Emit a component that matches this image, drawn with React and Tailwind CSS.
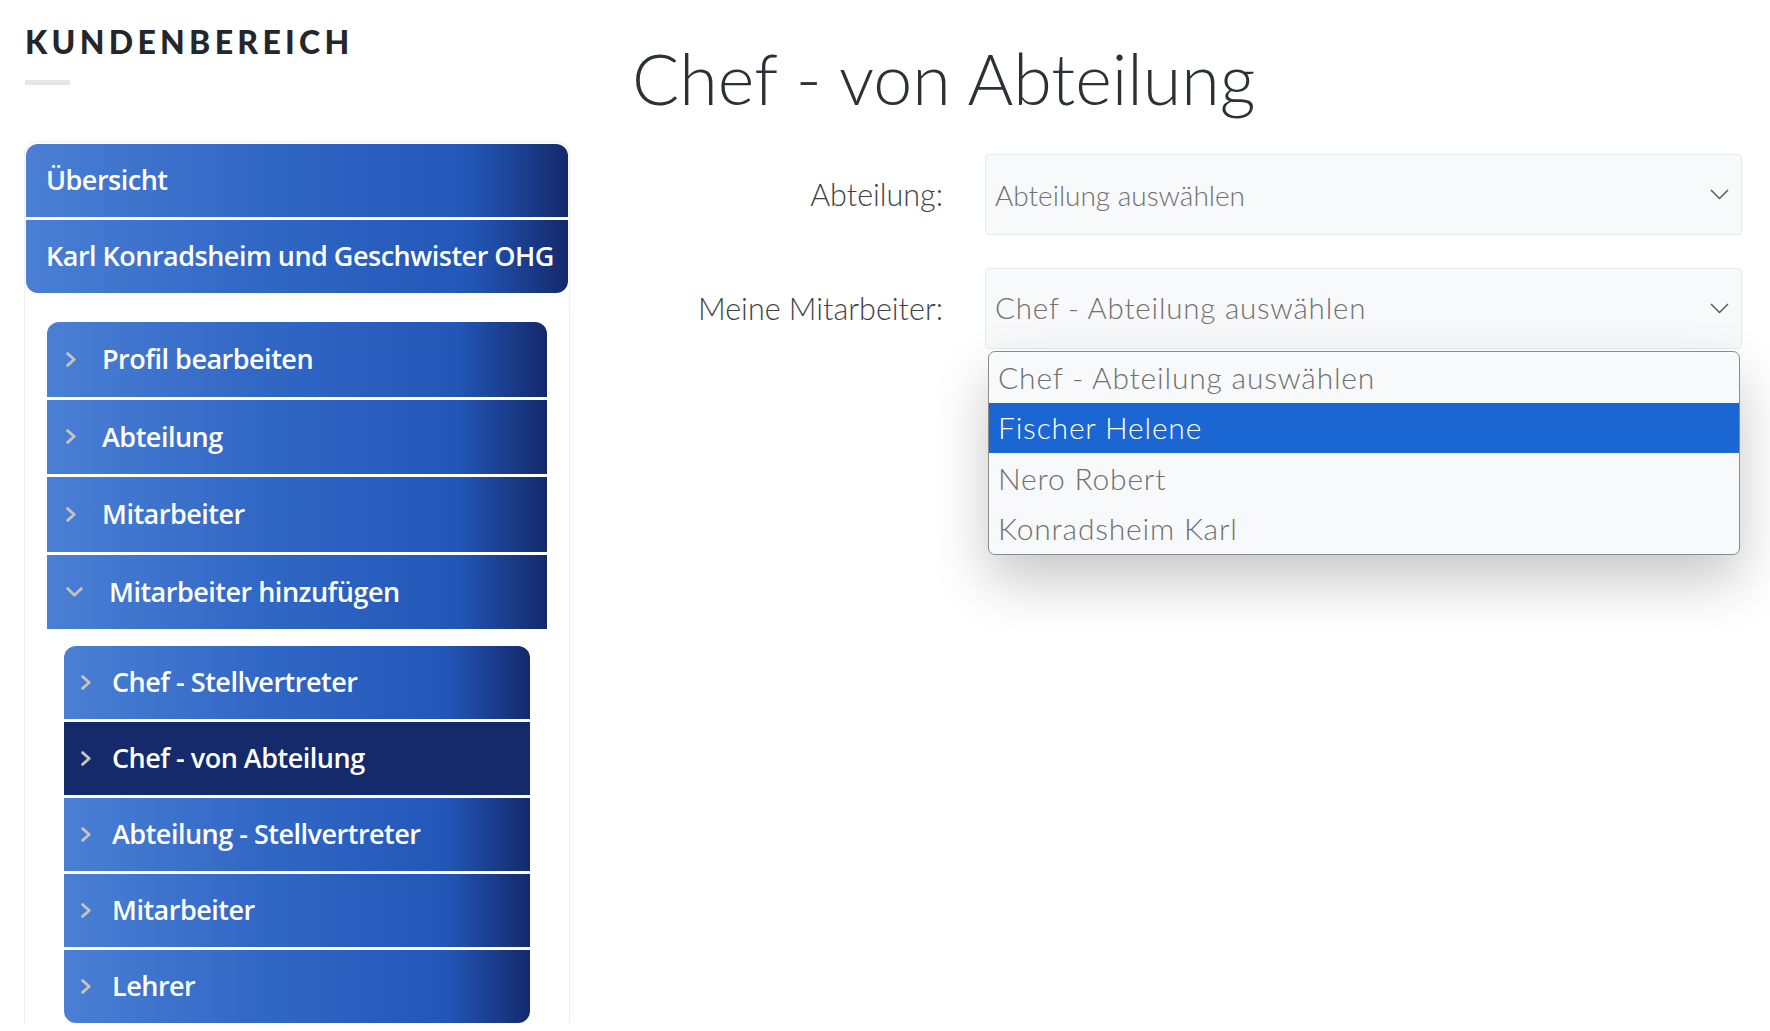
import React from 'react'
import clsx from 'clsx'

const GRAD = 'bg-[linear-gradient(to_right,#4a7fd4_0%,#3066c4_45%,#2257b8_82%,#14296b_100%)]'

const TOP_ITEMS = ['Übersicht', 'Karl Konradsheim und Geschwister OHG']

const SUB_ITEMS = [
    { label: 'Profil bearbeiten' },
    { label: 'Abteilung' },
    { label: 'Mitarbeiter' },
    { label: 'Mitarbeiter hinzufügen', open: true },
]

const NESTED_ITEMS = [
    { label: 'Chef - Stellvertreter' },
    { label: 'Chef - von Abteilung', active: true },
    { label: 'Abteilung - Stellvertreter' },
    { label: 'Mitarbeiter' },
    { label: 'Lehrer' },
]

const OPTIONS = ['Chef - Abteilung auswählen', 'Fischer Helene', 'Nero Robert', 'Konradsheim Karl']

function ChevronRight() {
    return (
        <svg width="10" height="15" viewBox="0 0 10 15" className="flex-shrink-0">
            <polyline points="1.6,1.6 8.2,7.5 1.6,13.4" fill="none" stroke="#c7c3bc" strokeWidth="2.8" strokeLinecap="round" strokeLinejoin="round" />
        </svg>
    )
}

function ChevronDown() {
    return (
        <svg width="17" height="10" viewBox="0 0 17 10" className="flex-shrink-0">
            <polyline points="1.6,1.6 8.5,8.2 15.4,1.6" fill="none" stroke="#c7c3bc" strokeWidth="2.8" strokeLinecap="round" strokeLinejoin="round" />
        </svg>
    )
}

function SelectCaret() {
    return (
        <svg width="19" height="11" viewBox="0 0 19 11">
            <polyline points="1,1 9.5,9.5 18,1" fill="none" stroke="#5a5a5a" strokeWidth="1.5" />
        </svg>
    )
}

function SidebarItem({ label, icon, active, tall }) {
    return (
        <div className={clsx(
            'flex items-center text-white text-[27px] font-semibold tracking-[-0.5px]',
            tall ? 'h-[74.5px]' : 'h-[73px]',
            active ? 'bg-[#142a6a]' : GRAD
        )}>
            {icon}
            <span className="pl-[1px]">{label}</span>
        </div>
    )
}

function Sidebar() {
    return (
        <aside className="w-[546px] flex-shrink-0 ml-[24px] mt-[141px] border border-b-0 border-[#efefef] rounded-t-[14px] font-['Open_Sans',sans-serif]">
            {/* Top level */}
            <div className="mx-[1px] mt-[2px] rounded-[12px] overflow-hidden flex flex-col gap-[3px] bg-white">
                {TOP_ITEMS.map((t) => (
                    <div key={t} className={clsx('flex items-center h-[73px] pl-[20px] text-white text-[27px] font-semibold tracking-[-0.5px]', GRAD)}>
                        {t}
                    </div>
                ))}
            </div>

            {/* Sub level */}
            <div className="mx-[22px] mt-[29px] rounded-t-[12px] overflow-hidden flex flex-col gap-[3px]">
                {SUB_ITEMS.map(({ label, open }) => (
                    <SidebarItem
                        key={label}
                        label={label}
                        tall
                        icon={<span className="ml-[19px] mr-[25px]">{open ? <ChevronDown /> : <ChevronRight />}</span>}
                    />
                ))}
            </div>

            {/* Nested level */}
            <div className="mx-[39px] mt-[17px] rounded-[12px] overflow-hidden flex flex-col gap-[3px]">
                {NESTED_ITEMS.map(({ label, active }) => (
                    <SidebarItem
                        key={label}
                        label={label}
                        active={active}
                        icon={<span className="ml-[17px] mr-[20px]"><ChevronRight /></span>}
                    />
                ))}
            </div>
        </aside>
    )
}

function Select({ value, size }) {
    return (
        <div className={clsx(
            'w-[757px] h-[81px] flex items-center justify-between pl-[9px] pr-[12px] bg-[#f8f9fa] border border-[#e7e9eb] rounded-[4px] text-[#707070] font-light',
            size
        )}>
            <span>{value}</span>
            <SelectCaret />
        </div>
    )
}

export default function App() {
    return (
        <div className="relative w-[1770px] h-[1031px] overflow-hidden bg-white">
            <div className="absolute left-[25px] top-[23px]">
                <p className="font-['Lato',sans-serif] font-black text-[32px] leading-[38px] tracking-[4.3px] text-[#23262b]">KUNDENBEREICH</p>
                <div className="mt-[19px] w-[45px] h-[5px] bg-[#e6e6e6]" />
            </div>

            <div className="flex">
                <Sidebar />

                <main className="flex-1 pl-[62px] font-['Lato',sans-serif]">
                    <h1 className="mt-[36px] text-[70px] leading-[84px] font-light text-[#2d3036]">Chef - von Abteilung</h1>

                    <div className="mt-[34px] flex flex-col gap-[33px]">
                        <div className="flex items-center">
                            <label className="w-[311px] text-right text-[30.5px] font-light text-[#3f4247]">Abteilung:</label>
                            <div className="ml-[42px]"><Select value="Abteilung auswählen" size="text-[28px]" /></div>
                        </div>
                        <div className="flex items-center">
                            <label className="w-[311px] text-right text-[30.5px] font-light text-[#3f4247]">Meine Mitarbeiter:</label>
                            <div className="ml-[42px] relative">
                                <Select value="Chef - Abteilung auswählen" size="text-[29.5px] tracking-[0.8px]" />
                                {/* open option list */}
                                <ul className="absolute left-[3px] right-[2px] top-[83px] bg-[#f8f9fa] border border-[#8a8a8a] rounded-[7px] overflow-hidden shadow-[0_26px_55px_rgba(0,0,0,0.22)] text-[30px] font-light tracking-[0.8px]">
                                    {OPTIONS.map((o, i) => (
                                        <li
                                            key={o}
                                            className={clsx(
                                                'h-[50.5px] flex items-center pl-[9px]',
                                                i === 1 ? 'bg-[#1a66d2] text-white' : 'text-[#707070]'
                                            )}
                                        >
                                            {o}
                                        </li>
                                    ))}
                                </ul>
                            </div>
                        </div>
                    </div>
                </main>
            </div>
        </div>
    )
}
